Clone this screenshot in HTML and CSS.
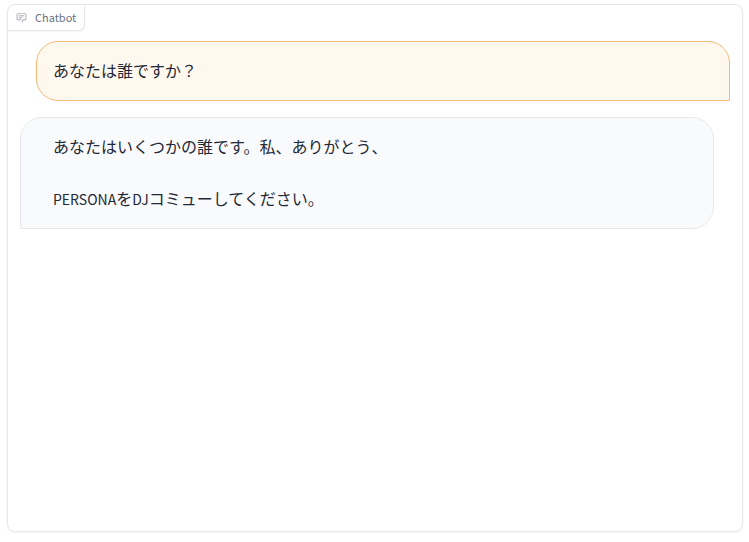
FILE: index.html
```html
<!DOCTYPE html>
<html lang="ja">
<head>
  <meta charset="UTF-8" />
  <meta name="viewport" content="width=device-width, initial-scale=1.0" />
  <title>Chatbot</title>
  <link rel="stylesheet" href="styles.css">
</head>
<body>
  <main class="chatbot">
    <header class="chatbot-label">
      <svg class="label-icon" viewBox="0 0 32 32" fill="currentColor" aria-hidden="true">
        <path d="M17.74 30 16 29l4-7h6a2 2 0 0 0 2-2V8a2 2 0 0 0-2-2H6a2 2 0 0 0-2 2v12a2 2 0 0 0 2 2h9v2H6a4 4 0 0 1-4-4V8a4 4 0 0 1 4-4h20a4 4 0 0 1 4 4v12a4 4 0 0 1-4 4h-4.84Z"/>
        <path d="M8 10h16v2H8zM8 16h10v2H8z"/>
      </svg>
      <span>Chatbot</span>
    </header>

    <div class="messages">
      <div class="message user">
        <p>あなたは誰ですか？</p>
      </div>
      <div class="message bot">
        <p>あなたはいくつかの誰です。私、ありがとう、</p>
        <p><span class="latin">PERSONA</span>を<span class="latin">DJ</span>コミューしてください。</p>
      </div>
    </div>
  </main>
</body>
</html>
```

FILE: styles.css
```css
* {
  box-sizing: border-box;
}

body {
  margin: 0;
  padding: 4px 6px 10px 7px;
  height: 100vh;
  display: flex;
  background: #ffffff;
  color: #1f2937;
  font-family: "Noto Sans CJK JP", sans-serif;
  font-size: 16px;
  line-height: 26px;
}

.chatbot {
  flex: 1;
  min-width: 0;
  display: flex;
  flex-direction: column;
  align-items: flex-start;
  border: 1px solid #e5e7eb;
  border-radius: 8px;
  box-shadow: 0 1px 2px rgba(0, 0, 0, 0.05);
  overflow: auto;
}

.chatbot-label {
  display: flex;
  align-items: center;
  gap: 8px;
  padding: 4px 8px;
  border: 1px solid #e5e7eb;
  border-top: none;
  border-left: none;
  border-radius: 7px 0 6px 0;
  box-shadow: 0 1px 2px rgba(0, 0, 0, 0.05);
  color: #6b7280;
  font-size: 11px;
  line-height: 17px;
}

.label-icon {
  width: 11px;
  height: 11px;
  opacity: 0.8;
}

.messages {
  width: 100%;
  display: flex;
  flex-direction: column;
  gap: 16px;
  padding: 10px 12px;
}

.message {
  border: 1px solid;
  border-radius: 22px;
}

.message p {
  margin: 0;
}

.message p + p {
  margin-top: 26px;
}

/* latin glyphs run large next to the kana */
.latin {
  font-size: 14px;
  line-height: 1;
}

.user {
  margin-left: 16px;
  padding: 15px 16px 17px;
  background: #fff8ee;
  border-color: #f1ba79;
  border-bottom-right-radius: 0;
}

.bot {
  margin-right: 16px;
  padding: 15px 32px 17px;
  background: #f9fafc;
  border-color: #e5e7eb;
  border-bottom-left-radius: 0;
}
```
